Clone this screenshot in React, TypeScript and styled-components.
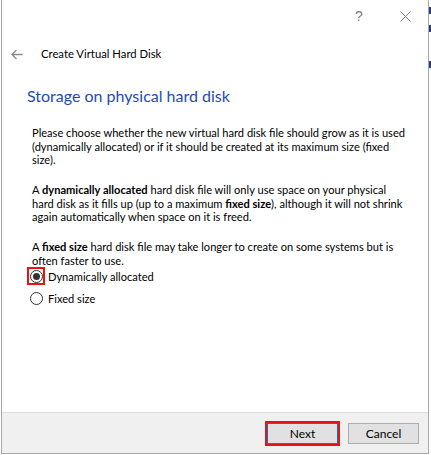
import { createGlobalStyle } from 'styled-components';
import styled from 'styled-components';

const GlobalStyle = createGlobalStyle`
  html, body {
    margin: 0;
    padding: 0;
    background: #ffffff;
  }
  body {
    font-family: Lato, "Liberation Sans", sans-serif;
    color: #000000;
  }
`;

const Page = styled.div`
  display: flex;
  width: 431px;
  height: 455px;
  overflow: hidden;
`;

const LeftEdge = styled.div`
  width: 1px;
  background: #ffffff;
`;

const Window = styled.div`
  width: 426px;
  height: 453px;
  display: flex;
  flex-direction: column;
  background: #ffffff;
  border-left: 1px solid #a8a8a8;
  border-right: 1px solid #a8a8a8;
  border-bottom: 1px solid #a8a8a8;
`;

// the window behind the dialog, only a sliver of it shows
const Outside = styled.div`
  flex: 1;
  background: #ffffff;
  display: flex;
  flex-direction: column;
  padding-top: 7px;
`;

const BehindMark = styled.div<{ $gap: number }>`
  width: 2px;
  height: 7px;
  margin-top: ${(p) => p.$gap}px;
  background: #2a3a7a;
`;

const TitleBar = styled.div`
  height: 32px;
  display: flex;
  justify-content: flex-end;
  align-items: center;
`;

const CaptionButton = styled.button`
  width: 46px;
  height: 32px;
  border: none;
  background: transparent;
  display: flex;
  align-items: center;
  justify-content: center;
  color: #7a7a7a;
  font-family: "Liberation Sans", sans-serif;
  font-size: 14px;
  padding: 0;
`;

const WizardHeader = styled.div`
  height: 44px;
  display: flex;
  align-items: center;
  padding-left: 9px;
  gap: 18px;
`;

const WizardTitle = styled.span`
  font-size: 11.3px;
  color: #000000;
  margin-top: -1px;
`;

const Content = styled.div`
  flex: 1;
  padding: 9px 0 0 25px;
  display: flex;
  flex-direction: column;
`;

const Heading = styled.h1`
  margin: 0 0 19px 0;
  font-size: 16px;
  font-weight: 400;
  color: #1f4cad;
  line-height: 22px;
`;

const Paragraph = styled.p`
  margin: 0 0 16.5px 5px;
  font-size: 11.1px;
  line-height: 13.5px;
  color: #000000;

  b {
    font-weight: 700;
  }
`;

const Options = styled.div`
  display: flex;
  flex-direction: column;
  gap: 4px;
  margin-top: -16.5px;
`;

const RadioRow = styled.label`
  display: flex;
  align-items: center;
  gap: 3px;
  font-size: 11.1px;
  height: 18px;
`;

const RadioBox = styled.span<{ $marked: boolean }>`
  width: 14px;
  height: 14px;
  display: flex;
  align-items: center;
  justify-content: center;
  border: 2px solid ${(p) => (p.$marked ? '#ee1111' : 'transparent')};
`;

const RadioCircle = styled.span<{ $checked: boolean }>`
  width: 11px;
  height: 11px;
  border-radius: 50%;
  border: 1px solid #333333;
  background: #ffffff;
  display: flex;
  align-items: center;
  justify-content: center;

  &::after {
    content: '';
    width: 7px;
    height: 7px;
    border-radius: 50%;
    background: ${(p) => (p.$checked ? '#333333' : 'transparent')};
  }
`;

const Footer = styled.div`
  height: 40px;
  border-top: 1px solid #dcdcdc;
  background: #f0f0f0;
  display: flex;
  align-items: center;
  justify-content: flex-end;
  padding-right: 9px;
  gap: 8px;
`;

const Highlight = styled.div`
  border: 2px solid #ee1111;
  display: flex;
`;

const DialogButton = styled.button<{ $focused?: boolean }>`
  width: 71px;
  height: 21px;
  background: #e1e1e1;
  border: 1px solid ${(p) => (p.$focused ? '#0078d7' : '#adadad')};
  font-family: Lato, "Liberation Sans", sans-serif;
  font-size: 12px;
  color: #000000;
  padding: 0;
`;

const BackArrow = () => (
  <svg width="12" height="11" viewBox="0 0 12 11">
    <path d="M1 5.5 H11.5 M5.5 1 L1 5.5 L5.5 10" fill="none" stroke="#8a8a8a" strokeWidth="1.3" />
  </svg>
);

const CloseIcon = () => (
  <svg width="11" height="11" viewBox="0 0 11 11">
    <path d="M0.5 0.5 L10.5 10.5 M10.5 0.5 L0.5 10.5" stroke="#7a7a7a" strokeWidth="1" />
  </svg>
);

export default function App() {
  return (
    <>
      <GlobalStyle />
      <Page>
        <LeftEdge />
        <Window>
          <TitleBar>
            <CaptionButton>?</CaptionButton>
            <CaptionButton>
              <CloseIcon />
            </CaptionButton>
          </TitleBar>
          <WizardHeader>
            <BackArrow />
            <WizardTitle>Create Virtual Hard Disk</WizardTitle>
          </WizardHeader>
          <Content>
            <Heading>Storage on physical hard disk</Heading>
            <Paragraph>
              Please choose whether the new virtual hard disk file should grow as it is used
              <br />
              (dynamically allocated) or if it should be created at its maximum size (fixed
              <br />
              size).
            </Paragraph>
            <Paragraph>
              A <b>dynamically allocated</b> hard disk file will only use space on your physical
              <br />
              hard disk as it fills up (up to a maximum <b>fixed size</b>), although it will not shrink
              <br />
              again automatically when space on it is freed.
            </Paragraph>
            <Paragraph>
              A <b>fixed size</b> hard disk file may take longer to create on some systems but is
              <br />
              often faster to use.
            </Paragraph>
            <Options>
              <RadioRow>
                <RadioBox $marked>
                  <RadioCircle $checked />
                </RadioBox>
                Dynamically allocated
              </RadioRow>
              <RadioRow>
                <RadioBox $marked={false}>
                  <RadioCircle $checked={false} />
                </RadioBox>
                Fixed size
              </RadioRow>
            </Options>
          </Content>
          <Footer>
            <Highlight>
              <DialogButton $focused>Next</DialogButton>
            </Highlight>
            <DialogButton>Cancel</DialogButton>
          </Footer>
        </Window>
        <Outside>
          <BehindMark $gap={0} />
          <BehindMark $gap={11} />
          <BehindMark $gap={29} />
        </Outside>
      </Page>
    </>
  );
}
